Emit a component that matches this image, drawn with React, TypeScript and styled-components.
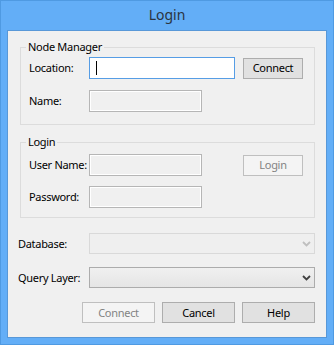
import styled, { createGlobalStyle } from "styled-components";

const GlobalStyle = createGlobalStyle`
  html, body {
    margin: 0;
    padding: 0;
    background: #ffffff;
  }
  body {
    font-family: "Segoe UI", "Noto Sans", "Open Sans", sans-serif;
    font-size: 11px;
    letter-spacing: -0.3px;
    color: #000;
  }
`;

const Window = styled.div`
  box-sizing: border-box;
  width: 334px;
  height: 345px;
  background: #63aef7;
  border: 1px solid #4f9ae2;
  padding: 0 6px 6px 6px;
  display: flex;
  flex-direction: column;
`;

const TitleBar = styled.div`
  height: 29px;
  display: flex;
  align-items: center;
  justify-content: center;
  font-size: 14px;
  letter-spacing: 0;
  color: #2b3440;
  padding-bottom: 2px;
  box-sizing: border-box;
`;

const Client = styled.div`
  flex: 1;
  background: #f0f0f0;
  border: 1px solid #5898d8;
  padding: 9px 11px 0 12px;
  display: flex;
  flex-direction: column;
`;

const Group = styled.fieldset<{ $top?: number; $pt: number; $pb: number }>`
  margin: ${(p) => p.$top ?? 0}px 0 0 0;
  border: 1px solid #dcdcdc;
  padding: ${(p) => p.$pt}px 11px ${(p) => p.$pb}px 8px;
  min-width: 0;
`;

const Legend = styled.legend`
  padding: 0 2px;
  margin-left: -3px;
  line-height: 14px;
`;

const FieldGrid = styled.div<{ $rowGap: number }>`
  display: grid;
  grid-template-columns: 52px 146px 60px;
  column-gap: 8px;
  row-gap: ${(p) => p.$rowGap}px;
  align-items: center;
`;

const Label = styled.span`
  line-height: 14px;
  white-space: nowrap;
`;

const TextBox = styled.div<{ $focused?: boolean; $w?: number }>`
  box-sizing: border-box;
  height: 22px;
  width: ${(p) => (p.$w ? `${p.$w}px` : "100%")};
  border: 1px solid ${(p) => (p.$focused ? "#569de5" : "#b6b6b6")};
  background: ${(p) => (p.$focused ? "#ffffff" : "#f0f0f0")};
  box-shadow: ${(p) => (p.$focused ? "none" : "inset 0 0 0 1px #ffffff")};
  display: flex;
  align-items: center;
  padding-left: 6px;
`;

const Caret = styled.span`
  width: 1px;
  height: 14px;
  background: #000;
`;

const Button = styled.button<{ $w: number; $h?: number }>`
  box-sizing: border-box;
  width: ${(p) => p.$w}px;
  height: ${(p) => p.$h ?? 21}px;
  margin: 0;
  padding: 0 0 1px 0;
  font-family: inherit;
  font-size: 11px;
  letter-spacing: inherit;
  color: #000;
  background: #e1e1e1;
  border: 1px solid #adadad;
  border-radius: 0;

  &:disabled {
    color: #838383;
    background: #f4f4f4;
    border-color: #bfbfbf;
  }
`;

const ComboGrid = styled.div`
  margin-top: 15px;
  margin-left: -2px;
  display: grid;
  grid-template-columns: 71px 226px;
  row-gap: 13px;
  align-items: center;
`;

const Combo = styled.div<{ $disabled?: boolean }>`
  box-sizing: border-box;
  height: 21px;
  border: 1px solid ${(p) => (p.$disabled ? "#d9d9d9" : "#acacac")};
  background: ${(p) =>
    p.$disabled ? "#efefef" : "linear-gradient(#f0f0f0, #e5e5e5)"};
  display: flex;
  align-items: center;
  justify-content: flex-end;
  padding-right: 3px;
  color: ${(p) => (p.$disabled ? "#bfbfbf" : "#404040")};
`;

const ButtonRow = styled.div`
  margin-top: 14px;
  display: flex;
  justify-content: flex-end;
  gap: 7px;
`;

function Chevron() {
  return (
    <svg width="9" height="6" viewBox="0 0 9 6">
      <polyline
        points="1,1 4.5,4.5 8,1"
        fill="none"
        stroke="currentColor"
        strokeWidth="1.8"
      />
    </svg>
  );
}

export default function App() {
  return (
    <>
      <GlobalStyle />
      <Window>
        <TitleBar>Login</TitleBar>
        <Client>
          <Group $pt={3} $pb={12}>
            <Legend>Node Manager</Legend>
            <FieldGrid $rowGap={11}>
              <Label>Location:</Label>
              <TextBox $focused>
                <Caret />
              </TextBox>
              <Button $w={60}>Connect</Button>
              <Label>Name:</Label>
              <TextBox $w={113} />
              <span />
            </FieldGrid>
          </Group>
          <Group $top={10} $pt={5} $pb={9}>
            <Legend>Login</Legend>
            <FieldGrid $rowGap={10}>
              <Label>User Name:</Label>
              <TextBox $w={113} />
              <Button $w={60} disabled>
                Login
              </Button>
              <Label>Password:</Label>
              <TextBox $w={113} />
              <span />
            </FieldGrid>
          </Group>
          <ComboGrid>
            <Label>Database:</Label>
            <Combo $disabled>
              <Chevron />
            </Combo>
            <Label>Query Layer:</Label>
            <Combo>
              <Chevron />
            </Combo>
          </ComboGrid>
          <ButtonRow>
            <Button $w={73} disabled>
              Connect
            </Button>
            <Button $w={73}>Cancel</Button>
            <Button $w={73}>Help</Button>
          </ButtonRow>
        </Client>
      </Window>
    </>
  );
}
